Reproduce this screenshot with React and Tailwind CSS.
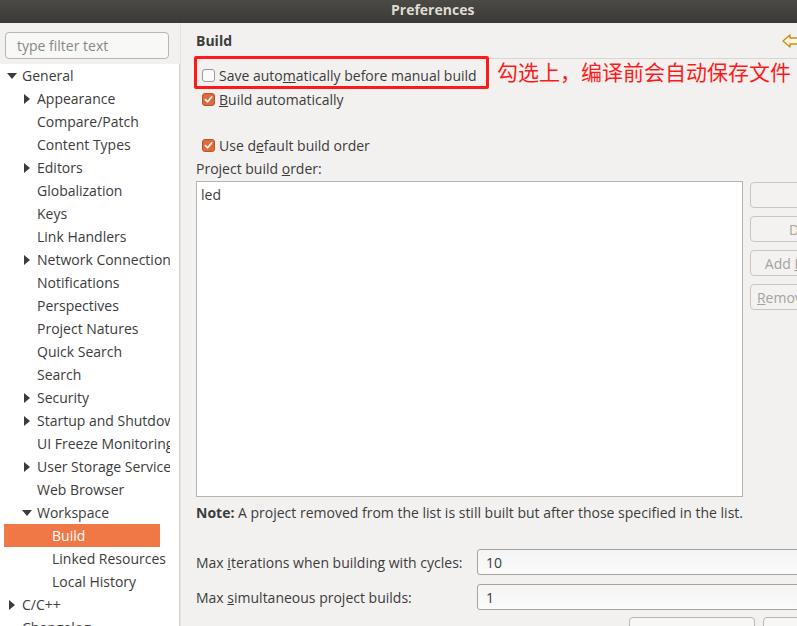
import React from 'react';

const FONT = { fontFamily: '"Open Sans", "Noto Sans CJK SC", sans-serif' };

const tree = [
  { label: 'General', level: 0, arrow: 'down' },
  { label: 'Appearance', level: 1, arrow: 'right' },
  { label: 'Compare/Patch', level: 1 },
  { label: 'Content Types', level: 1 },
  { label: 'Editors', level: 1, arrow: 'right' },
  { label: 'Globalization', level: 1 },
  { label: 'Keys', level: 1 },
  { label: 'Link Handlers', level: 1 },
  { label: 'Network Connections', level: 1, arrow: 'right' },
  { label: 'Notifications', level: 1 },
  { label: 'Perspectives', level: 1 },
  { label: 'Project Natures', level: 1 },
  { label: 'Quick Search', level: 1 },
  { label: 'Search', level: 1 },
  { label: 'Security', level: 1, arrow: 'right' },
  { label: 'Startup and Shutdown', level: 1, arrow: 'right' },
  { label: 'UI Freeze Monitoring', level: 1 },
  { label: 'User Storage Service', level: 1, arrow: 'right' },
  { label: 'Web Browser', level: 1 },
  { label: 'Workspace', level: 1, arrow: 'down' },
  { label: 'Build', level: 2, selected: true },
  { label: 'Linked Resources', level: 2 },
  { label: 'Local History', level: 2 },
  { label: 'C/C++', level: 0, arrow: 'right' },
  { label: 'Changelog', level: 0 },
];

const Arrow = ({ dir }) => (
  <svg className="w-[10px] h-[10px]" viewBox="0 0 10 10">
    {dir === 'down' ? (
      <path d="M0 2 L10 2 L5 8 Z" fill="#3c3c3c" />
    ) : (
      <path d="M2 0 L8 5 L2 10 Z" fill="#3c3c3c" />
    )}
  </svg>
);

const TreeRow = ({ item }) => {
  const textLeft = item.level === 0 ? 'pl-[22px]' : item.level === 1 ? 'pl-[37px]' : 'pl-[52px]';
  const arrowLeft = item.level === 0 ? 'left-[7px]' : 'left-[22px]';
  return (
    <div
      className={`relative h-[23px] flex items-center whitespace-nowrap text-[14px] ${textLeft} ${
        item.selected ? 'bg-[#f07746] text-white mr-[10px] ml-[4px] !pl-[48px]' : 'text-[#3c3c3c]'
      }`}
    >
      {item.arrow && (
        <span className={`absolute ${arrowLeft} top-[7px]`}>
          <Arrow dir={item.arrow} />
        </span>
      )}
      <span>{item.label}</span>
    </div>
  );
};

const Check = ({ checked }) =>
  checked ? (
    <span className="w-[13px] h-[13px] shrink-0 rounded-[3px] bg-[#df6a3b] border border-[#b65528] flex items-center justify-center">
      <svg viewBox="0 0 10 10" className="w-[9px] h-[9px]">
        <path d="M1.5 5.2 L4 7.6 L8.6 2" stroke="white" strokeWidth="1.8" fill="none" strokeLinecap="round" strokeLinejoin="round" />
      </svg>
    </span>
  ) : (
    <span className="w-[13px] h-[13px] shrink-0 rounded-[3px] bg-[#fbfbfb] border border-[#9e9a95]" />
  );

const CheckRow = ({ checked, children }) => (
  <div className="h-[24px] flex items-center gap-[4px] pl-[6px] text-[14px] text-[#3c3c3c] whitespace-nowrap">
    <Check checked={checked} />
    <span>{children}</span>
  </div>
);

const SideButton = ({ children }) => (
  <div className="h-[26px] w-[116px] shrink-0 rounded-[4px] border border-[#c9c6c2] bg-[#f3f2f1] flex items-center justify-center text-[14px] text-[#a6a29c] whitespace-nowrap">
    <span>{children}</span>
  </div>
);

export default function App() {
  return (
    <div className="w-[797px] h-[626px] overflow-hidden flex flex-col bg-[#f2f1f0]" style={FONT}>
      <div className="h-[23px] shrink-0 bg-gradient-to-b from-[#4b4a45] to-[#3a3935] flex items-center pb-[5px] pl-[391px] text-[14px] font-bold text-[#dfdbd2]">
        Preferences
      </div>
      <div className="flex flex-1 min-h-0">
        {/* left tree */}
        <div className="w-[180px] shrink-0 flex flex-col bg-white border-r border-[#d6d3cf]">
          <div className="bg-[#f2f1f0] pt-[9px] pb-[5px] px-[5px] w-[180px]">
            <div className="h-[27px] w-[164px] rounded-[4px] border border-[#b9b5b0] bg-[#f8f8f7] flex items-center pl-[11px] text-[14px] text-[#8a8884]">
              type filter text
            </div>
          </div>
          <div className="w-[170px] overflow-hidden">
            {tree.map((item) => (
              <TreeRow key={item.label} item={item} />
            ))}
          </div>
        </div>

        {/* right page */}
        <div className="relative flex-1 min-w-0 overflow-hidden pl-[15px] border-l border-[#e4e2df]">
          <div className="h-[35px] flex items-center justify-between">
            <span className="text-[14px] font-bold text-[#3c3c3c]">Build</span>
            <svg viewBox="0 0 20 16" className="w-[20px] h-[16px] -mr-[5px] mt-[1px]">
              <path d="M1 8 L8 2 L8 5 L18 5 L18 11 L8 11 L8 14 Z" fill="#fff6dc" stroke="#c98f1c" strokeWidth="1.4" strokeLinejoin="round" />
            </svg>
          </div>
          <div className="border-t border-[#d9d6d2] pt-[4px]">
            <CheckRow checked={false}>
              Save auto<u>m</u>atically before manual build
            </CheckRow>
            <CheckRow checked>
              <u>B</u>uild automatically
            </CheckRow>
            <div className="h-[22px]" />
            <CheckRow checked>
              Use d<u>e</u>fault build order
            </CheckRow>
            <div className="h-[22px] flex items-center text-[14px] text-[#3c3c3c] whitespace-nowrap">
              <span>
                Project build <u>o</u>rder:
              </span>
            </div>
            <div className="flex gap-[7px] mt-[2px]">
              <div className="w-[547px] h-[316px] shrink-0 bg-white border border-[#b7b4b0] pl-[4px] pt-[2px] text-[14px] text-[#3c3c3c]">
                led
              </div>
              <div className="flex flex-col gap-[8px] pt-[1px]">
                <SideButton>Up</SideButton>
                <SideButton>Down</SideButton>
                <SideButton>
                  Add <u>P</u>roject...
                </SideButton>
                <SideButton>
                  <u>R</u>emove Project
                </SideButton>
              </div>
            </div>
            <div className="h-[30px] flex items-center text-[14px] text-[#3c3c3c] whitespace-nowrap">
              <span>
                <b>Note:</b> A project removed from the list is still built but after those specified in the list.
              </span>
            </div>
            <div className="h-[22px]" />
            <div className="flex flex-col gap-[9px]">
              <div className="flex items-center h-[26px] text-[14px] text-[#3c3c3c]">
                <span className="w-[281px] shrink-0 whitespace-nowrap">
                  Max <u>i</u>terations when building with cycles:
                </span>
                <div className="h-[26px] w-[400px] shrink-0 rounded-[3px] border border-[#a7a4a0] bg-gradient-to-b from-[#f4f4f4] to-[#fbfbfb] flex items-center pl-[8px]">
                  10
                </div>
              </div>
              <div className="flex items-center h-[26px] text-[14px] text-[#3c3c3c]">
                <span className="w-[281px] shrink-0 whitespace-nowrap">
                  Max <u>s</u>imultaneous project builds:
                </span>
                <div className="h-[26px] w-[400px] shrink-0 rounded-[3px] border border-[#a7a4a0] bg-gradient-to-b from-[#f4f4f4] to-[#fbfbfb] flex items-center pl-[8px]">
                  1
                </div>
              </div>
            </div>
            <div className="flex gap-[8px] mt-[7px] pl-[433px]">
              <div className="h-[26px] w-[126px] shrink-0 rounded-[4px] border border-[#b9b6b2] bg-[#f7f7f6]" />
              <div className="h-[26px] w-[100px] shrink-0 rounded-[4px] border border-[#b9b6b2] bg-[#f7f7f6]" />
            </div>
          </div>

          {/* annotation overlay */}
          <div className="absolute left-[13px] top-[33px] w-[295px] h-[33px] border-[3px] border-[#ff1a1a] rounded-[2px]" />
          <div
            className="absolute left-[316px] top-[33px] text-[21px] text-[#ff1a1a] whitespace-nowrap"
            style={{ fontFamily: '"Noto Sans CJK SC", sans-serif' }}
          >
            勾选上，编译前会自动保存文件
          </div>
        </div>
      </div>
    </div>
  );
}
